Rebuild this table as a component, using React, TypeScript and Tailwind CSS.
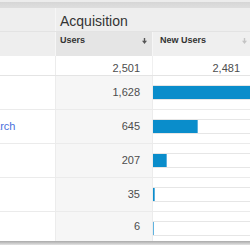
import React from "react";

const rows = [
  { label: "", users: "1,628", nu: 1628 },
  { label: "Organic Search", users: "645", nu: 645 },
  { label: "", users: "207", nu: 207 },
  { label: "", users: "35", nu: 35 },
  { label: "", users: "6", nu: 6 },
];

function SortArrow({ color }: { color: string }) {
  return (
    <svg width="5" height="6" viewBox="0 0 5 6" className="block">
      <rect x="1.8" y="0" width="1.4" height="3" fill={color} />
      <polygon points="0,2.8 5,2.8 2.5,6" fill={color} />
    </svg>
  );
}

export default function App() {
  return (
    <div className="w-[250px] h-[250px] overflow-hidden bg-white font-['Liberation_Sans',Arial,sans-serif]">
      {/* top band */}
      <div className="h-[2px] bg-[#ececec]" />
      <div className="h-[6px] bg-gradient-to-b from-[#d6d6d6] to-[#dedede]" />

      {/* group header */}
      <div className="flex h-[24px] bg-[#eeeeee] border-b border-[#e3e3e3]">
        <div className="w-[56px] shrink-0 border-r border-[#f6f6f6]" />
        <div className="flex-1 pl-[4px] pt-[2px] text-[14px] leading-[22px] text-[#333]">
          Acquisition
        </div>
      </div>

      {/* sub header */}
      <div className="flex h-[24px]">
        <div className="w-[56px] shrink-0 bg-[#eeeeee] border-r border-[#f6f6f6]" />
        <div className="w-[97px] shrink-0 bg-[#e5e5e5] border-r border-[#f6f6f6] flex justify-between pl-[4px] pr-[5px] pt-[3px]">
          <span className="text-[9px] leading-[11px] font-bold text-[#333]">Users</span>
          <span className="pt-[3px]">
            <SortArrow color="#555" />
          </span>
        </div>
        <div className="w-[98px] shrink-0 bg-[#efefef] flex justify-between pl-[7px] pr-[4px] pt-[3px]">
          <span className="text-[9px] leading-[11px] font-bold text-[#333]">New Users</span>
          <span className="pt-[3px]">
            <SortArrow color="#c4c4c4" />
          </span>
        </div>
      </div>

      {/* totals row */}
      <div className="flex h-[20px] border-b border-[#e4e4e4] text-[11px] leading-[13px] text-[#4d4d4d]">
        <div className="w-[56px] shrink-0 border-r border-[#ececec]" />
        <div className="w-[97px] shrink-0 border-r border-[#f0f0f0] flex items-end justify-end pr-[12px]">
          2,501
        </div>
        <div className="w-[98px] shrink-0 flex items-end justify-end pr-[11px]">2,481</div>
      </div>

      {/* data rows */}
      {rows.map((r, i) => {
        const last = i === rows.length - 1;
        const w = Math.max((r.nu / 1628) * 113, 1);
        return (
          <div
            key={i}
            className={`flex text-[11px] leading-[13px] text-[#4d4d4d] ${
              last ? "h-[29px]" : "h-[34px] border-b border-[#ebebeb]"
            }`}
          >
            <div className="w-[56px] shrink-0 border-r border-[#ececec] overflow-hidden flex items-center">
              {r.label && (
                <span className="whitespace-nowrap ml-[-61px] text-[#4a6fdc]">{r.label}</span>
              )}
            </div>
            <div className="w-[97px] shrink-0 bg-[#f6f6f6] border-r border-[#ececec] flex items-center justify-end pr-[12px]">
              {r.users}
            </div>
            <div className="w-[98px] shrink-0">
              <div className="mt-[9px] h-[15px] border-y border-[#e6e6e6] bg-white">
                <div
                  className={`h-[13px] ${
                    r.nu < 10
                      ? "bg-[#5fb3e0]"
                      : "bg-[#0a8dcb] border-r border-[#5cb0de]"
                  }`}
                  style={{ width: `${w}px` }}
                />
              </div>
            </div>
          </div>
        );
      })}

      {/* bottom shadow */}
      <div className="h-[4px] bg-gradient-to-b from-[#a9a9a9] to-[#e4e4e4]" />
    </div>
  );
}
